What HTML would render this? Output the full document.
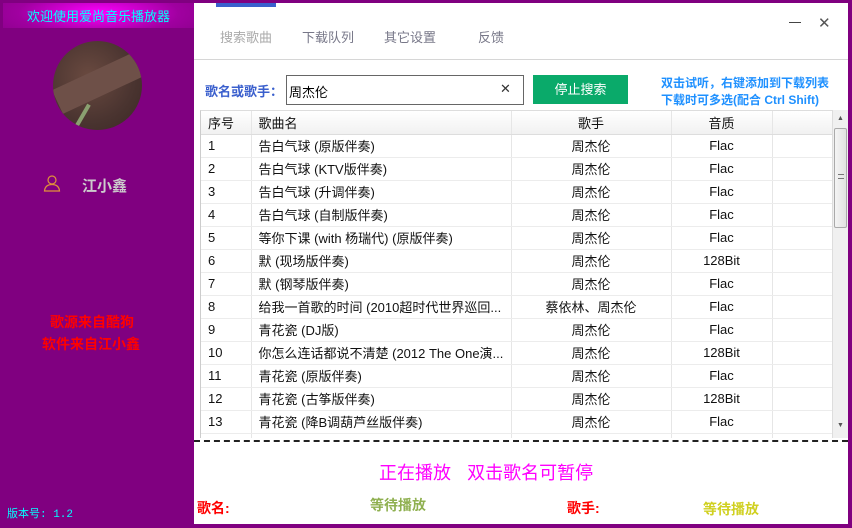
<!DOCTYPE html>
<html><head><meta charset="utf-8"><style>
*{margin:0;padding:0;box-sizing:border-box}
body{width:852px;height:528px;background:#800080;position:relative;overflow:hidden;font-family:"Liberation Sans","Noto Sans CJK SC",sans-serif}
.abs{position:absolute}
#main{position:absolute;left:194px;top:3px;width:654px;height:521px;background:#fff}
table{border-collapse:collapse;font-size:13px;color:#111;table-layout:fixed}
td,th{height:23px;border-right:1px solid #e6e6e6;border-bottom:1px solid #ececec;white-space:nowrap;overflow:hidden;font-weight:normal}
th{background:linear-gradient(#fff,#f1f1f1);border-bottom:1px solid #ddd}
td.c,th.c{text-align:center}
td.l,th.l{padding-left:7px;text-align:left}
</style></head><body>
<div class="abs" style="left:3px;top:3px;width:191px;height:25px;background:radial-gradient(ellipse 60% 120% at 50% 40%,#ff00ff,#a000a0 70%,#900090);"></div>
<div class="abs" style="left:3px;top:6px;width:191px;text-align:center;color:#00ffff;font-size:13px">欢迎使用爱尚音乐播放器</div>
<div class="abs" style="left:53px;top:41px;width:89px;height:89px;border-radius:50%;background:radial-gradient(circle at 40% 40%,#6a4a40,#4a3430 60%,#3a2824);overflow:hidden">
<div class="abs" style="left:0px;top:28px;width:95px;height:26px;background:#6e5048;transform:rotate(-25deg)"></div>
<div class="abs" style="left:28px;top:62px;width:4px;height:24px;background:#8aa070;transform:rotate(30deg)"></div></div>
<svg class="abs" style="left:43px;top:174px" width="18" height="18" viewBox="0 0 18 18"><circle cx="9" cy="6" r="4" fill="none" stroke="#e0903a" stroke-width="1.2"/><path d="M1.5 17 C2 12 5 10.5 9 10.5 C13 10.5 16 12 16.5 17 Z" fill="none" stroke="#e0903a" stroke-width="1.2"/></svg>
<div class="abs" style="left:82px;top:175px;color:#ccc;font-size:15px;font-weight:bold">江小鑫</div>
<div class="abs" style="left:50px;top:311px;color:#f00;font-size:14px;font-weight:bold;line-height:22px">歌源来自酷狗</div>
<div class="abs" style="left:42px;top:333px;color:#f00;font-size:14px;font-weight:bold;line-height:22px">软件来自江小鑫</div>
<div class="abs" style="left:7px;top:505px;color:#00ffff;font-size:11px;font-family:'Liberation Mono','Noto Sans CJK SC',monospace">版本号: 1.2</div>
<div id="main">
<div class="abs" style="left:22px;top:0;width:60px;height:4px;background:#3a5fcd"></div>
<div class="abs" style="left:26px;top:24px;font-size:13px;color:#aaa">搜索歌曲</div>
<div class="abs" style="left:108px;top:24px;font-size:13px;color:#778">下载队列</div>
<div class="abs" style="left:190px;top:24px;font-size:13px;color:#778">其它设置</div>
<div class="abs" style="left:284px;top:24px;font-size:13px;color:#778">反馈</div>
<div class="abs" style="left:595px;top:19px;width:12px;height:1px;background:#444"></div>
<div class="abs" style="left:624px;top:11px;font-size:15px;color:#555">✕</div>
<div class="abs" style="left:0;top:56px;width:654px;height:1px;background:#d6d6d6"></div>
<div class="abs" style="left:11px;top:78px;font-size:13px;color:#3a5fcd;font-weight:bold">歌名或歌手：</div>
<div class="abs" style="left:92px;top:72px;width:238px;height:30px;border:1px solid #666;font-size:13px;padding:6px 0 0 2px">周杰伦<span class="abs" style="left:213px;top:5px;color:#333">✕</span></div>
<div class="abs" style="left:339px;top:72px;width:95px;height:29px;background:#0aaa6a;color:#fff;font-size:13px;text-align:center;line-height:29px">停止搜索</div>
<div class="abs" style="left:467px;top:72px;font-size:12px;color:#1e90ff;font-weight:bold;line-height:17px">双击试听，右键添加到下载列表<br>下载时可多选(配合 Ctrl Shift)</div>
<div class="abs" style="left:6px;top:107px;width:633px;height:328px;overflow:hidden;border-left:1px solid #ccc;border-top:1px solid #ddd">
<table style="width:633px">
<colgroup><col style="width:50px"><col style="width:260px"><col style="width:160px"><col style="width:101px"><col style="width:62px"></colgroup>
<tr><th class="l">序号</th><th class="l">歌曲名</th><th class="c">歌手</th><th class="c">音质</th><th></th></tr>
<tr><td class="l">1</td><td class="l">告白气球 (原版伴奏)</td><td class="c">周杰伦</td><td class="c">Flac</td><td></td></tr>
<tr><td class="l">2</td><td class="l">告白气球 (KTV版伴奏)</td><td class="c">周杰伦</td><td class="c">Flac</td><td></td></tr>
<tr><td class="l">3</td><td class="l">告白气球 (升调伴奏)</td><td class="c">周杰伦</td><td class="c">Flac</td><td></td></tr>
<tr><td class="l">4</td><td class="l">告白气球 (自制版伴奏)</td><td class="c">周杰伦</td><td class="c">Flac</td><td></td></tr>
<tr><td class="l">5</td><td class="l">等你下课 (with 杨瑞代) (原版伴奏)</td><td class="c">周杰伦</td><td class="c">Flac</td><td></td></tr>
<tr><td class="l">6</td><td class="l">默 (现场版伴奏)</td><td class="c">周杰伦</td><td class="c">128Bit</td><td></td></tr>
<tr><td class="l">7</td><td class="l">默 (钢琴版伴奏)</td><td class="c">周杰伦</td><td class="c">Flac</td><td></td></tr>
<tr><td class="l">8</td><td class="l">给我一首歌的时间 (2010超时代世界巡回...</td><td class="c">蔡依林、周杰伦</td><td class="c">Flac</td><td></td></tr>
<tr><td class="l">9</td><td class="l">青花瓷 (DJ版)</td><td class="c">周杰伦</td><td class="c">Flac</td><td></td></tr>
<tr><td class="l">10</td><td class="l">你怎么连话都说不清楚 (2012 The One演...</td><td class="c">周杰伦</td><td class="c">128Bit</td><td></td></tr>
<tr><td class="l">11</td><td class="l">青花瓷 (原版伴奏)</td><td class="c">周杰伦</td><td class="c">Flac</td><td></td></tr>
<tr><td class="l">12</td><td class="l">青花瓷 (古筝版伴奏)</td><td class="c">周杰伦</td><td class="c">128Bit</td><td></td></tr>
<tr><td class="l">13</td><td class="l">青花瓷 (降B调葫芦丝版伴奏)</td><td class="c">周杰伦</td><td class="c">Flac</td><td></td></tr>
<tr><td class="l">14</td><td class="l">青花瓷 (伴奏)</td><td class="c">周杰伦</td><td class="c">Flac</td><td></td></tr>
</table></div>
<div class="abs" style="left:638px;top:107px;width:16px;height:328px;background:#f0f0f0;border-left:1px solid #ddd">
<div class="abs" style="left:4px;top:5px;font-size:7px;color:#555">▲</div>
<div class="abs" style="left:1px;top:18px;width:13px;height:100px;background:linear-gradient(90deg,#f4f4f4,#e2e2e2);border:1px solid #aaa;border-radius:2px"><div class="abs" style="left:3px;top:45px;width:6px;height:5px;border-top:1px solid #777;border-bottom:1px solid #777"></div></div>
<div class="abs" style="left:4px;top:312px;font-size:7px;color:#555">▼</div></div>
<div class="abs" style="left:0;top:437px;width:654px;border-top:2px dashed #222"></div>
<div class="abs" style="left:185px;top:456px;font-size:18px;color:#ff00ff;font-family:'Noto Sans CJK SC',sans-serif">正在播放&nbsp;&nbsp;&nbsp;&nbsp;双击歌名可暂停</div>
<div class="abs" style="left:3px;top:495px;font-size:14px;color:#f00;font-weight:bold">歌名:</div>
<div class="abs" style="left:176px;top:492px;font-size:14px;color:#8fb050;font-weight:bold">等待播放</div>
<div class="abs" style="left:373px;top:495px;font-size:14px;color:#f00;font-weight:bold">歌手:</div>
<div class="abs" style="left:509px;top:496px;font-size:14px;color:#d0d020;font-weight:bold">等待播放</div>
</div>
</body></html>
